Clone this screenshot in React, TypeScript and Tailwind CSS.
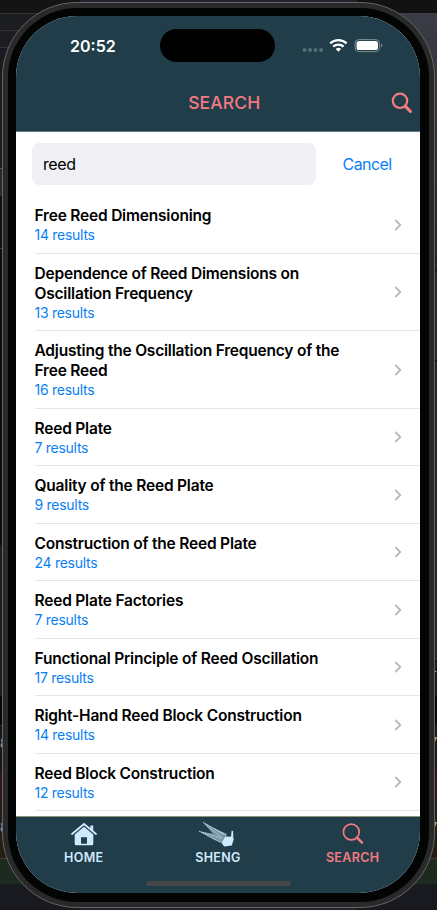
import React from "react";

type Result = { title: string[]; count: number };

const results: Result[] = [
  { title: ["Free Reed Dimensioning"], count: 14 },
  { title: ["Dependence of Reed Dimensions on", "Oscillation Frequency"], count: 13 },
  { title: ["Adjusting the Oscillation Frequency of the", "Free Reed"], count: 16 },
  { title: ["Reed Plate"], count: 7 },
  { title: ["Quality of the Reed Plate"], count: 9 },
  { title: ["Construction of the Reed Plate"], count: 24 },
  { title: ["Reed Plate Factories"], count: 7 },
  { title: ["Functional Principle of Reed Oscillation"], count: 17 },
  { title: ["Right-Hand Reed Block Construction"], count: 14 },
  { title: ["Reed Block Construction"], count: 12 },
];

function Chevron() {
  return (
    <svg width="8" height="12" viewBox="0 0 8 12" fill="none" className="mb-[1px] shrink-0">
      <path d="M1.3 1 6.3 6 1.3 11" stroke="#b9b9bb" strokeWidth="1.8" />
    </svg>
  );
}

function ResultRow({ result }: { result: Result }) {
  return (
    <li className="ml-[18.5px] flex items-center justify-between border-b border-[#e6e6e8] pt-[10px] pb-[8px] pr-[18.5px]">
      <div>
        {result.title.map((line) => (
          <div key={line} className="h-5 whitespace-nowrap text-[15.5px] leading-5 font-semibold tracking-[-0.2px] text-black">
            {line}
          </div>
        ))}
        <div className="h-[18.5px] text-[14px] leading-[18.5px] tracking-[-0.28px] text-[#0a7ff5]">{result.count} results</div>
      </div>
      <Chevron />
    </li>
  );
}

function StatusBar() {
  return (
    <div className="flex h-[60px] items-start">
      <div className="ml-[54px] mt-[19px] w-[90px] text-[16px] leading-[22px] font-semibold text-white">20:52</div>
      <div className="mt-[13px] h-[33px] w-[115px] shrink-0 rounded-full bg-black" />
      <div className="mt-[21px] ml-[25.5px] flex h-4 w-[82px] items-center">
        <svg width="82" height="16" viewBox="0 0 82 16" fill="none" className="shrink-0">
          <g fill="#52707a">
            <circle cx="3.5" cy="13" r="2" />
            <circle cx="9" cy="13" r="2" />
            <circle cx="14.5" cy="13" r="2" />
            <circle cx="20" cy="13" r="2" />
          </g>
          <g stroke="#fff" strokeWidth="2.3">
            <path d="M29.2 6.4a12 12 0 0 1 16.4 0" />
            <path d="M32.2 9.6a7.6 7.6 0 0 1 10.4 0" />
          </g>
          <path d="M34.7 12a4 4 0 0 1 5.4 0L37.4 14.8Z" fill="#fff" />
          <rect x="54" y="2.6" width="24.5" height="12" rx="3.8" stroke="#7b9098" />
          <rect x="55.5" y="4.1" width="21.5" height="9" rx="2.6" fill="#fff" />
          <path d="M80 6.6c1.8.7 1.8 3.5 0 4.2Z" fill="#7b9098" />
        </svg>
      </div>
    </div>
  );
}

function NavigationBar() {
  return (
    <div className="flex h-[54px] items-center">
      <div className="flex-1 pl-[41.5px] text-center text-[17.5px] leading-6 font-medium tracking-[0.1px] text-[#f27a82]">SEARCH</div>
      <svg width="22" height="22" viewBox="0 0 22 22" fill="none" className="mr-[7px] shrink-0">
        <circle cx="9" cy="8.8" r="7.2" stroke="#f27a82" strokeWidth="2.2" />
        <path d="m14.4 14.3 5 5" stroke="#f27a82" strokeWidth="3.2" strokeLinecap="round" />
      </svg>
    </div>
  );
}

function HomeIcon() {
  return (
    <svg width="28" height="24" viewBox="0 0 28 24">
      <path d="M2 12 14 2.1 26 12" fill="none" stroke="#cfe9ff" strokeWidth="1.9" strokeLinecap="round" />
      <path d="M20.4 3.4h2.8v6l-2.8-2.3Z" fill="#cfe9ff" />
      <path fillRule="evenodd" d="m14 4.8 9.3 7.7v9.2q0 1.5-1.5 1.5H6.2q-1.5 0-1.5-1.5v-9.2Zm-3 10.4v6.6h6v-6.6Z" fill="#cfe9ff" />
    </svg>
  );
}

function ShengIcon() {
  return (
    <svg width="38" height="26" viewBox="0 0 38 26">
      <path d="M4 1.2 18 8.6l10 4.4-4 9.5-9.5-4L0 10.2l14 2.6Z" fill="#7797a6" />
      <path d="m4 1.2 21 12.3M6 3.2l17 13.3M0 10.2l23 7.3M2 11.2l20 10.3M16 8l11 6" stroke="#c1dce9" strokeWidth=".9" strokeDasharray="1.5 .7" />
      <path d="m26.4 15.5 6.4.2q2.4.5 1.8 3l-1.8 5.8-7.6 1-2.6-3.5Z" fill="#cfe9ff" />
      <path d="m32 16 .6-6.2 1.5.3.2 6.4Z" fill="#cfe9ff" />
    </svg>
  );
}

function SearchIcon() {
  return (
    <svg width="22" height="24" viewBox="0 0 22 24" fill="none">
      <circle cx="9.3" cy="11" r="7.9" stroke="#f27a82" strokeWidth="1.7" />
      <path d="m15 16.7 5 5" stroke="#f27a82" strokeWidth="2.6" strokeLinecap="round" />
    </svg>
  );
}

function TabBar() {
  return (
    <nav className="flex h-[77px] shrink-0 flex-col border-t border-[#8f9275] bg-[#213d49]">
      <div className="grid h-[64px] grid-cols-3 text-[12.5px] leading-4 font-semibold tracking-[0.35px] text-[#cfe9ff]">
        <div className="flex flex-col items-center pt-[5px] pl-[1px]"><HomeIcon /><span className="mt-[4px]">HOME</span></div>
        <div className="flex flex-col items-center pt-[4px]"><ShengIcon /><span className="mt-[3px]">SHENG</span></div>
        <div className="flex flex-col items-center pt-[4px] text-[#f27a82]"><SearchIcon /><span className="mt-[5px]">SEARCH</span></div>
      </div>
      <div className="mx-auto h-[5px] w-[145px] rounded-full bg-[#464749]" />
    </nav>
  );
}

function EditorBackdrop() {
  return (
    <div className="absolute inset-0 overflow-hidden bg-[#20242a]">
      <div className="flex h-full justify-between">
        <div className="flex w-20 flex-col text-[13px] text-[#aaa]">
          <div className="h-[13px] bg-[#141415]" />
          <div className="h-[17px] border-t border-[#333] bg-[#1c1d21]" />
          <div className="h-[17px] border-t border-[#333] bg-[#1c1d21]" />
          <div className="h-[121px] border-t border-[#333] bg-[#1a1b20]" />
          <div className="h-[28px] border-t border-[#555] bg-[#29292b]" />
          <div className="h-[52px] bg-[#111]" />
          <div className="h-[297px] border-t border-[#444] bg-[#0c0c0e]" />
          <div className="h-[151px] bg-[#1c1c1d]" />
          <div className="h-[29px] bg-[#08080a]" />
          <div className="h-[47px] border-t border-[#30291b] bg-[#1b1812] pt-2">8</div>
          <div className="h-[26px] bg-[#321222]" />
          <div className="h-[60px] bg-[#241e13] pt-5">8</div>
          <div className="h-[26px] border-t border-[#493b27] bg-[#1c2b20]" />
          <div className="grow bg-[#191a20]" />
        </div>
        <div className="flex w-20 flex-col text-right text-[13px] text-[#bbb]">
          <div className="h-[13px] bg-[#121212]" />
          <div className="h-[257px] bg-gradient-to-b from-[#3a3d46] to-[#1c2229]" />
          <div className="h-[91px] border-y border-[#080808] bg-[#292525]" />
          <div className="h-[297px] bg-[#1d252c]" />
          <div className="h-[38px] border-t border-[#343a3d] bg-[#171a1e] pt-[3px]">-</div>
          <div className="h-[29px] bg-[#08080a]" />
          <div className="h-[47px] bg-[#1c190e] pt-2">7</div>
          <div className="h-[26px] bg-[#321222]" />
          <div className="h-[60px] bg-[#241e13] pt-5">7</div>
          <div className="h-[26px] border-t border-[#493b27] bg-[#1c2b20]" />
          <div className="grow bg-[#191a20]" />
        </div>
      </div>
    </div>
  );
}

export default function App() {
  return (
    <div className="relative h-[910px] w-[437px] overflow-hidden font-['Inter','Liberation_Sans',sans-serif]">
      <EditorBackdrop />
      <div className="absolute top-[2px] left-[2px] h-[906px] w-[433px] rounded-[75px] border border-[#656565] bg-[#292929] p-[5px]">
        <div className="h-full rounded-[69px] bg-[#030404] p-[8px]">
          <div className="flex h-[877px] w-[404px] flex-col overflow-hidden rounded-[61px] bg-white">
            <header className="h-[116px] shrink-0 border-b border-[#62798a] bg-[#213d49]">
              <StatusBar />
              <NavigationBar />
            </header>
            <div className="flex h-[64px] shrink-0 items-start pt-[10.5px] pl-[16px]">
              <div className="h-[42px] w-[284px] rounded-[8px] bg-[#efeff4] pl-[11px] text-[16px] leading-[42px] tracking-[-0.4px] text-black">reed</div>
              <div className="flex-1 pr-[2px] text-center text-[16px] leading-[42px] tracking-[-0.6px] text-[#0a7ff5]">Cancel</div>
            </div>
            <ul className="min-h-0 flex-1 overflow-hidden">
              {results.map((result) => <ResultRow key={result.title[0]} result={result} />)}
            </ul>
            <TabBar />
          </div>
        </div>
      </div>
    </div>
  );
}
